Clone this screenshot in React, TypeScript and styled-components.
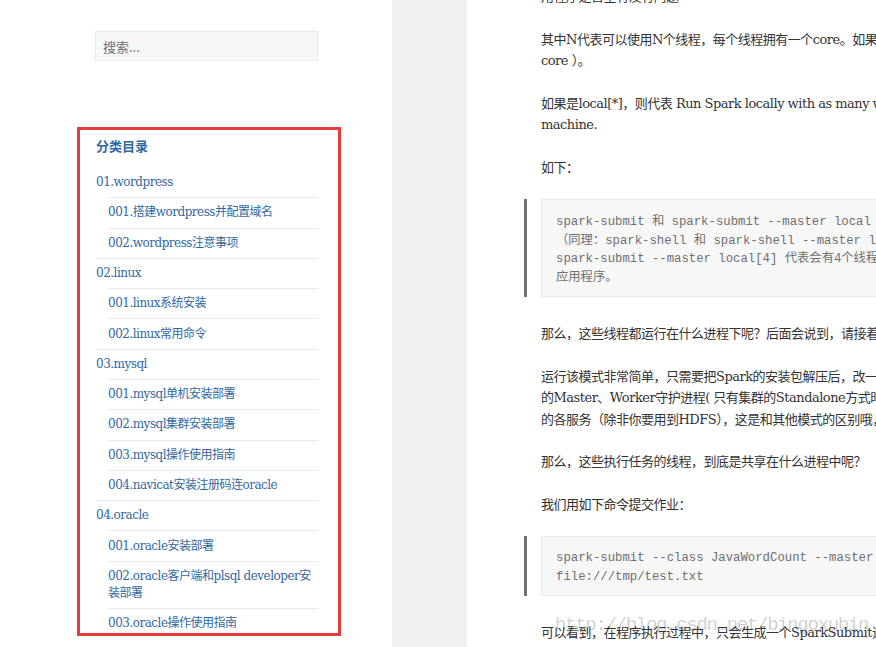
import { FC } from 'react';
import styled, { createGlobalStyle } from 'styled-components';

const GlobalStyle = createGlobalStyle`
  html, body {
    margin: 0;
    padding: 0;
    background: #f1f1f1;
    overflow: hidden;
  }
`;

const Page = styled.div`
  display: flex;
  height: 647px;
  overflow: hidden;
  background: #f1f1f1;
`;

const Sidebar = styled.aside`
  width: 392px;
  flex-shrink: 0;
  background: #ffffff;
  padding: 31px 0 0 95px;
  box-sizing: border-box;
`;

const SearchBox = styled.div`
  width: 223px;
  height: 30px;
  box-sizing: border-box;
  border: 1px solid #eaeaea;
  background: #f7f7f7;
  padding: 0 7px;
  display: flex;
  align-items: center;
  font-family: "Noto Sans CJK SC", "Noto Sans", sans-serif;
  font-size: 13px;
  color: #707070;
`;

// red annotation frame drawn round the category widget
const Widget = styled.section`
  width: 264px;
  height: 509px;
  box-sizing: border-box;
  margin: 66px 0 0 -18px;
  padding: 7px 20px 0 16px;
  border: 3px solid #e53b3d;
  overflow: hidden;
`;

const WidgetTitle = styled.h2`
  margin: 0 0 14px;
  font-family: "Noto Sans CJK SC", "Noto Sans", sans-serif;
  font-size: 13px;
  line-height: 17px;
  font-weight: 700;
  color: #2f6aa3;
`;

const CatList = styled.ul<{ $nested?: boolean }>`
  list-style: none;
  margin: 0 0 0 ${(p) => (p.$nested ? '12px' : '0')};
  padding: 0;

  ${(p) => !p.$nested && '& > li:first-child { border-top: 0; }'}
`;

const CatItem = styled.li`
  border-top: 1px solid #eaeaea;
`;

const CatLink = styled.a`
  display: block;
  padding: 6.15px 0;
  font-family: "DejaVu Serif", "Noto Sans CJK SC", serif;
  font-size: 12px;
  line-height: 17px;
  letter-spacing: -0.5px;
  color: #32689f;
  text-decoration: none;
`;

const Content = styled.main`
  position: relative;
  flex: 1;
  margin-left: 75px;
  background: #ffffff;
  padding-left: 74px;
  overflow: hidden;
  font-family: "DejaVu Serif", "Noto Sans CJK SC", serif;
  font-size: 13px;
  line-height: 21.5px;
  letter-spacing: -0.5px;
  color: #333333;
`;

const Para = styled.p<{ $first?: boolean }>`
  margin: ${(p) => (p.$first ? '-13.75px' : '0')} 0 21px;
  white-space: nowrap;
`;

const Quote = styled.blockquote`
  margin: 0 0 26px -17px;
  padding-left: 14px;
  border-left: 3px solid #707070;
`;

const Code = styled.pre<{ $pad: string }>`
  margin: 0;
  padding: ${(p) => p.$pad};
  width: 600px;
  background: #f7f7f7;
  border: 1px solid #eaeaea;
  font-family: "Liberation Mono", "Noto Sans CJK SC", monospace;
  font-size: 12.3px;
  line-height: 18.5px;
  letter-spacing: 0;
  color: #6f6f6f;
  white-space: pre;
`;

const Watermark = styled.span`
  position: absolute;
  left: 88px;
  top: 616px;
  font-family: "Liberation Mono", monospace;
  font-size: 19px;
  line-height: 19px;
  letter-spacing: -1.3px;
  color: rgba(0, 0, 0, 0.2);
  white-space: nowrap;
  pointer-events: none;
`;

type Cat = { name: string; children?: string[] };

const categories: Cat[] = [
  { name: '01.wordpress', children: ['001.搭建wordpress并配置域名', '002.wordpress注意事项'] },
  { name: '02.linux', children: ['001.linux系统安装', '002.linux常用命令'] },
  {
    name: '03.mysql',
    children: ['001.mysql单机安装部署', '002.mysql集群安装部署', '003.mysql操作使用指南', '004.navicat安装注册码连oracle'],
  },
  { name: '04.oracle', children: ['001.oracle安装部署', '002.oracle客户端和plsql developer安装部署', '003.oracle操作使用指南'] },
];

const CategoryTree: FC<{ items: Cat[] }> = ({ items }) => (
  <CatList>
    {items.map((cat) => (
      <CatItem key={cat.name}>
        <CatLink href="#">{cat.name}</CatLink>
        {cat.children && (
          <CatList $nested>
            {cat.children.map((child) => (
              <CatItem key={child}>
                <CatLink href="#">{child}</CatLink>
              </CatItem>
            ))}
          </CatList>
        )}
      </CatItem>
    ))}
  </CatList>
);

export default function App() {
  return (
    <>
      <GlobalStyle />
      <Page>
        <Sidebar>
          <SearchBox>搜索...</SearchBox>
          <Widget>
            <WidgetTitle>分类目录</WidgetTitle>
            <CategoryTree items={categories} />
          </Widget>
        </Sidebar>

        <Content>
          <Para $first>用程序是否全有没有问题</Para>
          <Para>
            其中N代表可以使用N个线程，每个线程拥有一个core。如果不指定N，则默认是1个线程（该线程有1个
            <br />
            core ）。
          </Para>
          <Para>
            如果是local[*]，则代表 Run Spark locally with as many worker threads as logical cores on your
            <br />
            machine.
          </Para>
          <Para>如下：</Para>
          <Quote>
            <Code $pad="13px 14px 9px">{`spark-submit 和 spark-submit --master local 效果是一样的
（同理：spark-shell 和 spark-shell --master local 效果是一样的）
spark-submit --master local[4] 代表会有4个线程（每个线程一个core）来并发执行
应用程序。`}</Code>
          </Quote>
          <Para>那么，这些线程都运行在什么进程下呢？后面会说到，请接着往下看。</Para>
          <Para>
            运行该模式非常简单，只需要把Spark的安装包解压后，改一些常用的配置即可使用，而不用启动Spark
            <br />
            的Master、Worker守护进程( 只有集群的Standalone方式时，才需要这两个角色)，也不用启动Hadoop
            <br />
            的各服务（除非你要用到HDFS），这是和其他模式的区别哦，要记住才能理解。
          </Para>
          <Para>那么，这些执行任务的线程，到底是共享在什么进程中呢？</Para>
          <Para>我们用如下命令提交作业：</Para>
          <Quote>
            <Code $pad="12px 14px 9px">{`spark-submit --class JavaWordCount --master local[10] JavaWordCount.jar
file:///tmp/test.txt`}</Code>
          </Quote>
          <Para>可以看到，在程序执行过程中，只会生成一个SparkSubmit进程。</Para>
          <Watermark>http://blog.csdn.net/bingoxubin</Watermark>
        </Content>
      </Page>
    </>
  );
}
